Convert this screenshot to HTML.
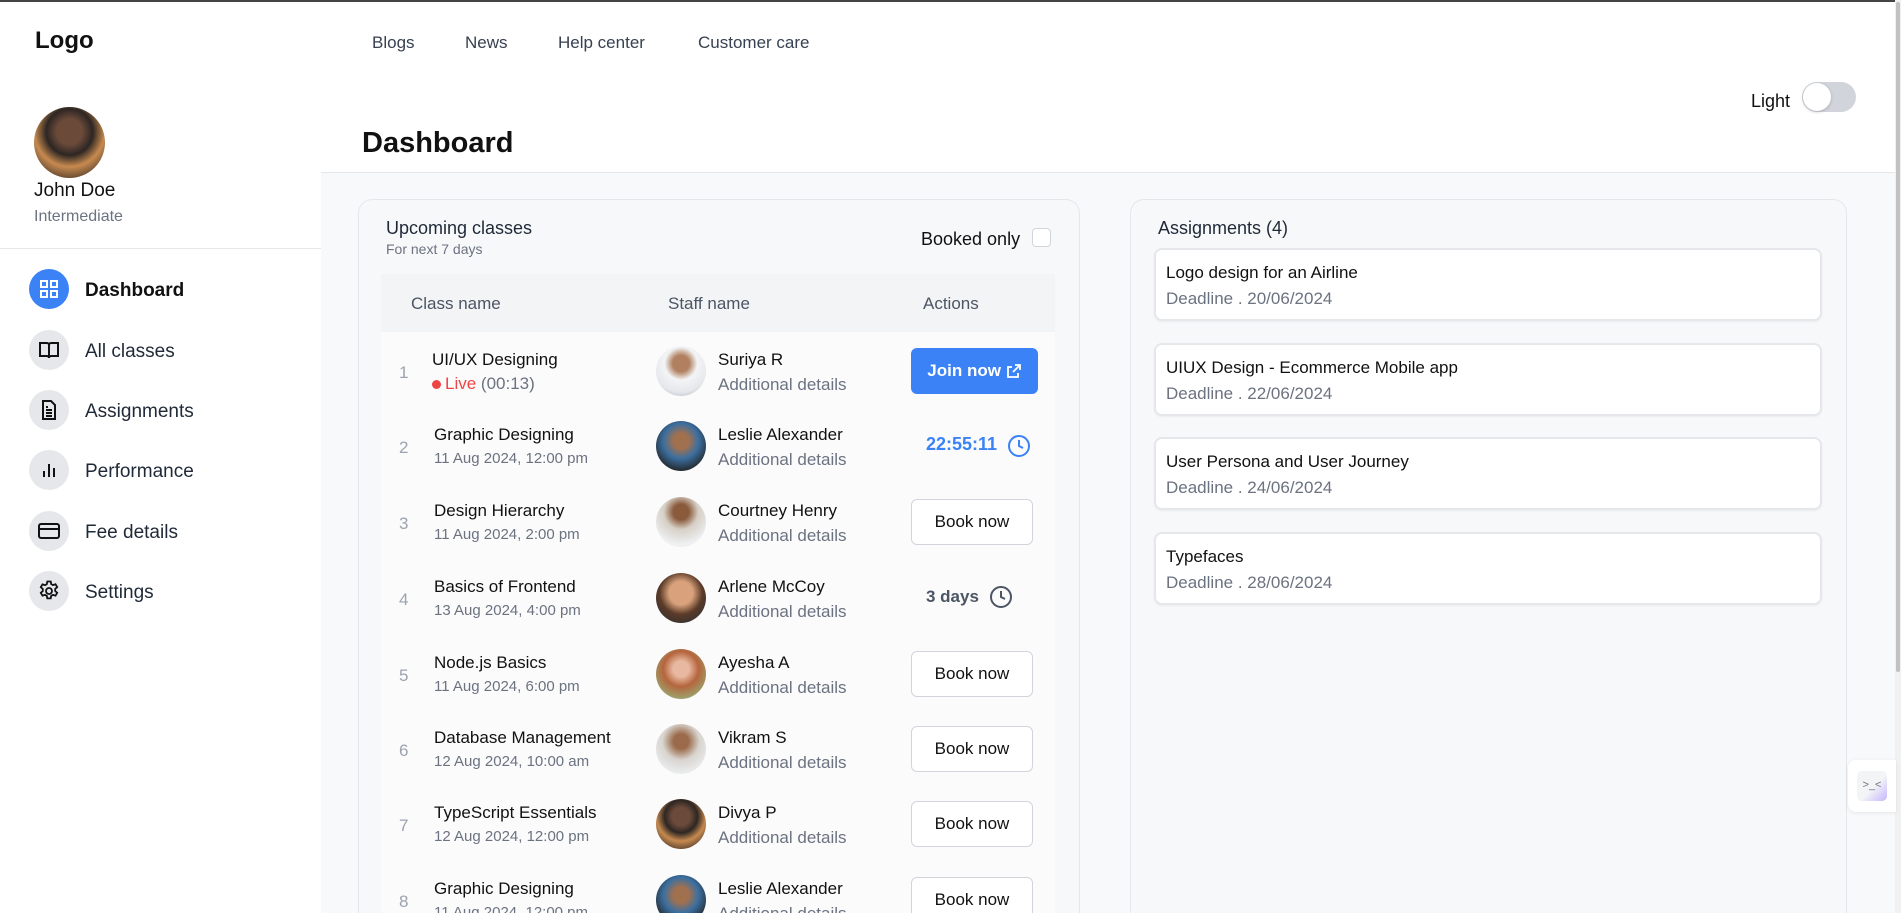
<!DOCTYPE html>
<html style="overflow:hidden;width:1901px;height:913px"><head><meta charset="utf-8"><style>
*{box-sizing:border-box;margin:0;padding:0}
body{width:1901px;height:913px;overflow:hidden;background:#fff;font-family:"Liberation Sans",sans-serif;color:#111;position:relative}
.a{position:absolute;white-space:nowrap}
.nav{font-size:17px;color:#374151;top:33px}
.ic{position:absolute;left:29px;width:40px;height:40px;border-radius:50%;background:#e5e7eb;display:flex;align-items:center;justify-content:center}
.it{position:absolute;left:85px;font-size:19px;color:#1f2937}
.row{position:absolute;left:381px;width:674px;height:75px}
.num{position:absolute;left:18px;top:29px;color:#9ca3af;font-size:17px}
.cn{position:absolute;left:53px;top:16px;font-size:17px;color:#111}
.cs{position:absolute;left:53px;top:41px;font-size:15px;color:#6b7280}
.av{position:absolute;left:275px;top:12px;width:50px;height:50px;border-radius:50%}
.sn{position:absolute;left:337px;top:16px;font-size:17px;color:#111}
.sd{position:absolute;left:337px;top:41px;font-size:17px;color:#6b7280}
.bk{position:absolute;left:530px;top:14px;width:122px;height:46px;border:1px solid #d1d5db;border-radius:6px;background:#fff;font-size:17px;display:flex;align-items:center;justify-content:center;color:#111}
.as{position:absolute;left:1154px;width:668px;height:73px;background:#fff;border:2px solid #e5e7eb;border-radius:8px;box-shadow:0 1px 2px rgba(0,0,0,.05)}
.as .t{position:absolute;left:10px;top:13px;font-size:17px;color:#111}
.as .d{position:absolute;left:10px;top:39px;font-size:17px;color:#6b7280}
</style></head><body>
<div class="a" style="left:0;top:0;width:1901px;height:2px;background:#444"></div>
<div class="a" style="left:35px;top:27px;font-size:24px;font-weight:bold">Logo</div>
<div class="a nav" style="left:372px">Blogs</div>
<div class="a nav" style="left:465px">News</div>
<div class="a nav" style="left:558px">Help center</div>
<div class="a nav" style="left:698px">Customer care</div>

<div class="a" style="left:34px;top:107px;width:71px;height:71px;border-radius:50%;background:radial-gradient(circle at 50% 35%,#6b4a3a 0 22%,#2d2623 40%,#c78a4f 60%,#3a2c25 90%)"></div>
<div class="a" style="left:34px;top:180px;font-size:19px;color:#111">John Doe</div>
<div class="a" style="left:34px;top:208px;font-size:16px;color:#6b7280">Intermediate</div>
<div class="a" style="left:0;top:248px;width:321px;height:1px;background:#e5e7eb"></div>

<div class="ic" style="top:269px;background:#3b82f6"><svg width="22" height="22" viewBox="0 0 22 22" fill="none" stroke="#fff" stroke-width="2"><rect x="3" y="3" width="6" height="6"/><rect x="13" y="3" width="6" height="6"/><rect x="3" y="13" width="6" height="6"/><rect x="13" y="13" width="6" height="6"/></svg></div>
<div class="it" style="top:280px;font-weight:bold;color:#111">Dashboard</div>
<div class="ic" style="top:330px"><svg width="22" height="22" viewBox="0 0 22 22" fill="none" stroke="#111" stroke-width="2"><path d="M2 4h7a2 2 0 0 1 2 2v13a2 2 0 0 0-2-2H2zM20 4h-7a2 2 0 0 0-2 2v13a2 2 0 0 1 2-2h7z"/></svg></div>
<div class="it" style="top:341px">All classes</div>
<div class="ic" style="top:390px"><svg width="22" height="22" viewBox="0 0 22 22" fill="none" stroke="#111" stroke-width="2"><path d="M5 2h8l4 4v14H5zM8 11h6M8 14h6M8 17h6M8 8h2"/></svg></div>
<div class="it" style="top:401px">Assignments</div>
<div class="ic" style="top:450px"><svg width="22" height="22" viewBox="0 0 22 22" fill="none" stroke="#111" stroke-width="2"><path d="M6 18v-6M11 18V5M16 18v-9"/></svg></div>
<div class="it" style="top:461px">Performance</div>
<div class="ic" style="top:511px"><svg width="24" height="22" viewBox="0 0 24 22" fill="none" stroke="#111" stroke-width="2"><rect x="2" y="4" width="20" height="14" rx="2"/><path d="M2 9h20"/></svg></div>
<div class="it" style="top:522px">Fee details</div>
<div class="ic" style="top:571px"><svg width="24" height="24" viewBox="0 0 24 24" fill="none" stroke="#111" stroke-width="1.8"><circle cx="12" cy="12" r="3"/><path d="M10.3 2.5h3.4l.5 2.6 1.8 1 2.5-.9 1.7 2.9-2 1.8v2.1l2 1.8-1.7 2.9-2.5-.9-1.8 1-.5 2.6h-3.4l-.5-2.6-1.8-1-2.5.9-1.7-2.9 2-1.8V10l-2-1.8 1.7-2.9 2.5.9 1.8-1z"/></svg></div>
<div class="it" style="top:582px">Settings</div>

<div class="a" style="left:321px;top:172px;width:1574px;height:741px;background:#f8f9fb;border-top:1px solid #e5e7eb"></div>
<div class="a" style="left:362px;top:127px;font-size:29px;font-weight:bold">Dashboard</div>
<div class="a" style="left:1751px;top:91px;font-size:18px">Light</div>
<div class="a" style="left:1802px;top:82px;width:54px;height:30px;border-radius:15px;background:#d1d5db"></div>
<div class="a" style="left:1803px;top:83px;width:28px;height:28px;border-radius:50%;background:#fff;box-shadow:0 1px 3px rgba(0,0,0,.2)"></div>
<div class="a" style="left:1895px;top:0;width:6px;height:913px;background:#f1f1f1"></div>
<div class="a" style="left:1896px;top:2px;width:4px;height:670px;background:#c1c1c1;border-radius:2px"></div>

<!-- left card -->
<div class="a" style="left:358px;top:199px;width:722px;height:714px;border:1px solid #e5e7eb;border-bottom:none;border-radius:14px 14px 0 0;background:#f7f8fa;overflow:hidden">
</div>
<div class="a" style="left:386px;top:218px;font-size:18px;color:#1f2937">Upcoming classes</div>
<div class="a" style="left:386px;top:241px;font-size:14px;color:#6b7280">For next 7 days</div>
<div class="a" style="left:921px;top:229px;font-size:18px">Booked only</div>
<div class="a" style="left:1032px;top:228px;width:19px;height:19px;border:1px solid #d1d5db;border-radius:4px;background:#fff"></div>
<div class="a" style="left:381px;top:274px;width:674px;height:58px;background:#f3f4f6"></div>
<div class="a" style="left:411px;top:294px;font-size:17px;color:#4b5563">Class name</div>
<div class="a" style="left:668px;top:294px;font-size:17px;color:#4b5563">Staff name</div>
<div class="a" style="left:923px;top:294px;font-size:17px;color:#4b5563">Actions</div>
<div class="a" style="left:381px;top:332px;width:674px;height:581px;background:#fbfbfc"></div>

<div class="row" style="top:334px"><div class="num">1</div><div class="cn" style="left:51px">UI/UX Designing</div><div class="cs" style="left:51px;top:40px;font-size:17px"><span style="display:inline-block;width:9px;height:9px;border-radius:50%;background:#ef4444;margin-right:4px"></span><span style="color:#ef4444">Live</span> (00:13)</div><div class="av" style="background:radial-gradient(circle at 50% 35%,#b08060 0 20%,#f3f4f6 40%,#e5e7eb 70%,#9ca3af)"></div><div class="sn">Suriya R</div><div class="sd">Additional details</div><div class="a" style="left:530px;top:14px;width:127px;height:46px;background:#3b82f6;border-radius:6px;color:#fff;font-size:17px;font-weight:bold;display:flex;align-items:center;justify-content:center">Join now&nbsp;<svg width="16" height="16" viewBox="0 0 16 16" fill="none" stroke="#fff" stroke-width="1.8"><path d="M9 2h5v5M14 2L7 9M12 10v4H2V4h4"/></svg></div></div>
<div class="row" style="top:409px"><div class="num">2</div><div class="cn">Graphic Designing</div><div class="cs">11 Aug 2024, 12:00 pm</div><div class="av" style="background:radial-gradient(circle at 50% 40%,#a0704f 0 20%,#3b6fa0 45%,#222 80%)"></div><div class="sn">Leslie Alexander</div><div class="sd">Additional details</div><div class="a" style="left:545px;top:25px;color:#3b82f6;font-weight:bold;font-size:18px">22:55:11</div><div class="a" style="left:626px;top:25px"><svg width="24" height="24" viewBox="0 0 24 24" fill="none" stroke="#3b82f6" stroke-width="2"><circle cx="12" cy="12" r="10"/><path d="M12 6v6l4 2"/></svg></div></div>
<div class="row" style="top:485px"><div class="num">3</div><div class="cn">Design Hierarchy</div><div class="cs">11 Aug 2024, 2:00 pm</div><div class="av" style="background:radial-gradient(circle at 50% 30%,#8a5a3c 0 18%,#d6cfc5 40%,#eef0f2 75%)"></div><div class="sn">Courtney Henry</div><div class="sd">Additional details</div><div class="bk">Book now</div></div>
<div class="row" style="top:561px"><div class="num">4</div><div class="cn">Basics of Frontend</div><div class="cs">13 Aug 2024, 4:00 pm</div><div class="av" style="background:radial-gradient(circle at 50% 40%,#d9a27c 0 30%,#5a3a28 55%,#333 85%)"></div><div class="sn">Arlene McCoy</div><div class="sd">Additional details</div><div class="a" style="left:545px;top:26px;color:#4b5563;font-weight:bold;font-size:17px">3 days</div><div class="a" style="left:608px;top:24px"><svg width="24" height="24" viewBox="0 0 24 24" fill="none" stroke="#4b5563" stroke-width="2"><circle cx="12" cy="12" r="10"/><path d="M12 6v6l4 2"/></svg></div></div>
<div class="row" style="top:637px"><div class="num">5</div><div class="cn">Node.js Basics</div><div class="cs">11 Aug 2024, 6:00 pm</div><div class="av" style="background:radial-gradient(circle at 50% 40%,#e8b9a0 0 20%,#b5653d 45%,#9aa870 80%)"></div><div class="sn">Ayesha A</div><div class="sd">Additional details</div><div class="bk">Book now</div></div>
<div class="row" style="top:712px"><div class="num">6</div><div class="cn">Database Management</div><div class="cs">12 Aug 2024, 10:00 am</div><div class="av" style="background:radial-gradient(circle at 50% 35%,#9a6a4a 0 18%,#d8d4cf 45%,#eceef0 80%)"></div><div class="sn">Vikram S</div><div class="sd">Additional details</div><div class="bk">Book now</div></div>
<div class="row" style="top:787px"><div class="num">7</div><div class="cn">TypeScript Essentials</div><div class="cs">12 Aug 2024, 12:00 pm</div><div class="av" style="background:radial-gradient(circle at 50% 35%,#6b4a3a 0 22%,#2d2623 40%,#c78a4f 60%,#3a2c25 90%)"></div><div class="sn">Divya P</div><div class="sd">Additional details</div><div class="bk">Book now</div></div>
<div class="row" style="top:863px;height:50px;overflow:hidden"><div class="num">8</div><div class="cn">Graphic Designing</div><div class="cs">11 Aug 2024, 12:00 pm</div><div class="av" style="background:radial-gradient(circle at 50% 40%,#a0704f 0 20%,#3b6fa0 45%,#222 80%)"></div><div class="sn">Leslie Alexander</div><div class="sd">Additional details</div><div class="bk">Book now</div></div>

<!-- right card -->
<div class="a" style="left:1130px;top:199px;width:717px;height:714px;border:1px solid #e5e7eb;border-bottom:none;border-radius:14px 14px 0 0;background:#f7f8fa"></div>
<div class="a" style="left:1158px;top:218px;font-size:18px;color:#1f2937">Assignments (4)</div>
<div class="as" style="top:248px"><div class="t">Logo design for an Airline</div><div class="d">Deadline . 20/06/2024</div></div>
<div class="as" style="top:343px"><div class="t">UIUX Design - Ecommerce Mobile app</div><div class="d">Deadline . 22/06/2024</div></div>
<div class="as" style="top:437px"><div class="t">User Persona and User Journey</div><div class="d">Deadline . 24/06/2024</div></div>
<div class="as" style="top:532px"><div class="t">Typefaces</div><div class="d">Deadline . 28/06/2024</div></div>

<div class="a" style="left:1848px;top:760px;width:48px;height:52px;background:#fff;border-radius:8px 0 0 8px;box-shadow:0 1px 4px rgba(0,0,0,.08)"></div>
<div class="a" style="left:1857px;top:771px;width:30px;height:30px;border-radius:5px;background:linear-gradient(135deg,#f3f4f6 55%,#c4b5fd);font-size:11px;color:#6b7280;text-align:center;line-height:28px">&gt;_&lt;</div>
</body></html>
